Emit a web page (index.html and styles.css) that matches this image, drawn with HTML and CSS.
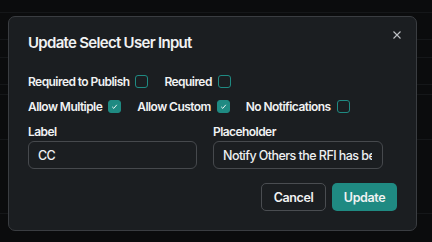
FILE: index.html
```html
<!DOCTYPE html>
<html lang="en">
<head>
<meta charset="UTF-8">
<meta name="viewport" content="width=device-width, initial-scale=1.0">
<title>Update Select User Input</title>
<link rel="stylesheet" href="styles.css">
</head>
<body>
    <div class="page">
        <div class="page-row row-tall"></div>
        <div class="page-row row-short"></div>
        <div class="page-row row-tall"></div>
        <div class="page-row row-thin"></div>
        <div class="page-row row-wide"></div>
        <div class="page-row row-last"></div>
    </div>

    <div class="modal">
        <div class="modal-header">
            <h2>Update Select User Input</h2>
            <button type="button" class="close-button" aria-label="Close">
                <svg width="8" height="8" viewBox="0 0 8 8">
                    <path d="M0.5 0.5L7.5 7.5M7.5 0.5L0.5 7.5" stroke="#bfc2c6" stroke-width="1.1" fill="none"/>
                </svg>
            </button>
        </div>

        <div class="check-row first-row">
            <label class="check">Required to Publish <input type="checkbox"><span class="box"></span></label>
            <label class="check">Required <input type="checkbox"><span class="box"></span></label>
        </div>
        <div class="check-row">
            <label class="check">Allow Multiple <input type="checkbox" checked><span class="box"></span></label>
            <label class="check">Allow Custom <input type="checkbox" checked><span class="box"></span></label>
            <label class="check">No Notifications <input type="checkbox"><span class="box"></span></label>
        </div>

        <div class="fields">
            <div class="field">
                <label for="label">Label</label>
                <input type="text" id="label" class="text-input" value="CC">
            </div>
            <div class="field">
                <label for="placeholder">Placeholder</label>
                <input type="text" id="placeholder" class="text-input" value="Notify Others the RFI has been updated">
            </div>
        </div>

        <div class="actions">
            <button type="button" class="cancel-button">Cancel</button>
            <button type="button" class="update-button">Update</button>
        </div>
    </div>
</body>
</html>
```
FILE: styles.css
```css
body {
    margin: 0;
    padding: 0;
    height: 100vh;
    background: #0b0c0d;
    overflow: hidden;
    font-family: Inter, "Noto Sans", sans-serif;
    color: #f1f2f3;
    letter-spacing: -0.035em;
}

/* faint page behind the overlay */
.page {
    padding-top: 12px;
}

.page-row {
    border-top: 1px solid #151719;
}

.row-tall {
    height: 26px;
}

.row-short {
    height: 17px;
}

.row-thin {
    height: 9px;
}

.row-wide {
    height: 44px;
}

.row-last {
    height: 73px;
    border-bottom: 1px solid #151719;
}

.modal {
    position: absolute;
    top: 16px;
    left: 8px;
    width: 409px;
    box-sizing: border-box;
    padding: 16px 19px 19px 19px;
    background: #1b1e21;
    border: 1px solid #3a3d41;
    border-radius: 7px;
    display: flex;
    flex-direction: column;
}

.modal-header {
    display: flex;
    justify-content: space-between;
    align-items: flex-start;
    height: 20px;
}

h2 {
    margin: 0;
    font-size: 15px;
    font-weight: 600;
    line-height: 20px;
    letter-spacing: -0.7px;
}

.close-button {
    margin: -2px -4px 0 0;
    padding: 0;
    border: none;
    background: none;
    width: 8px;
    height: 8px;
    display: flex;
}

.check-row {
    display: flex;
    gap: 16px;
    height: 25px;
    flex-shrink: 0;
    align-items: center;
}

.first-row {
    margin-top: 16px;
}

.check {
    display: flex;
    align-items: center;
    gap: 6px;
    font-size: 12px;
    font-weight: 600;
}

.check input {
    display: none;
}

.box {
    width: 11px;
    height: 11px;
    border: 1px solid #1f8a82;
    border-radius: 3px;
}

.check input:checked + .box {
    background: #1f8a82 url("data:image/svg+xml;utf8,<svg xmlns='http://www.w3.org/2000/svg' viewBox='0 0 11 11'><path d='M3.2 5.8L4.8 7.4L7.8 3.8' stroke='white' stroke-width='0.9' fill='none'/></svg>") no-repeat center;
}

.fields {
    display: flex;
    gap: 16px;
    margin-top: 5px;
}

.field {
    display: flex;
    flex-direction: column;
    gap: 2px;
}

.field label {
    font-size: 12px;
    font-weight: 600;
    line-height: 15px;
}

.text-input {
    box-sizing: border-box;
    width: 169px;
    height: 28px;
    padding: 0 10px 0 9px;
    border: 1px solid #46494d;
    border-radius: 6px;
    background: transparent;
    color: #eef0f1;
    font-family: Inter, "Noto Sans", sans-serif;
    font-size: 12.5px;
    font-weight: 500;
    letter-spacing: -0.55px;
    outline: none;
}

.field + .field .text-input {
    width: 170px;
}

.actions {
    display: flex;
    justify-content: flex-end;
    gap: 6px;
    margin-top: 14px;
}

.actions button {
    box-sizing: border-box;
    height: 28px;
    border-radius: 5px;
    font-family: Inter, "Noto Sans", sans-serif;
    font-size: 12.5px;
    font-weight: 600;
    letter-spacing: -0.4px;
    color: #f1f2f3;
}

.cancel-button {
    width: 65px;
    background: transparent;
    border: 1px solid #4a4d51;
}

.update-button {
    width: 65px;
    background: #1f8a82;
    border: none;
}
```
